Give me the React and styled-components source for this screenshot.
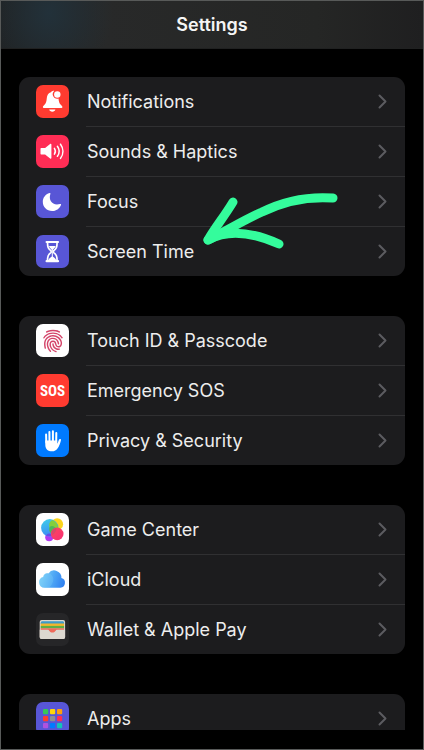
import styled, { createGlobalStyle } from "styled-components";
import { IoFingerPrint } from "react-icons/io5";

const Bell = () => (
  <svg viewBox="0 0 33 33" fill="#fff">
    <path d="M16.6 6c.9-.5 1.5-.4 1.6-.1-1.4 1.2-1.9 3.1-1.2 4.9.9 2.3 3.2 3.3 5.5 2.7.3 3.2.8 4.8 2.3 6.3 1 1 1.6 1.5 1.6 2.3 0 .7-.5 1-1.3 1H8.2c-.8 0-1.3-.4-1.3-1 0-.8.6-1.3 1.6-2.3 1.6-1.7 2-3.4 2.3-6.7.3-3.1 1.6-5.2 4.1-5.8.3-.6.8-1 1.7-1.3z" />
    <circle cx="21.3" cy="9.5" r="3.2" />
    <path d="M13.2 24.5h6.2c-.3 1.4-1.5 2.2-3.1 2.2s-2.8-.8-3.1-2.2z" />
  </svg>
);

const Speaker = () => (
  <svg viewBox="0 0 33 33" fill="none" stroke="#fff" strokeWidth="1.5" strokeLinecap="round">
    <path d="M5.5 13h3.6l5-4c.7-.5 1.3-.2 1.3.6v13.4c0 .8-.6 1.1-1.3.6l-5-4H5.5c-.7 0-1-.4-1-1v-4.6c0-.6.3-1 1-1z" fill="#fff" stroke="none" />
    <path d="M18.4 13.4c1.2 1.8 1.2 4 0 5.800M21.4 11.3c2.2 3 2.2 7 0 10M24.5 9.2c3.2 4.3 3.2 9.9 0 14.200" />
  </svg>
);

const Moon = () => (
  <svg viewBox="0 0 33 33" fill="#fff">
    <path d="M13.6 8c.5-.2 1 .2.8.8-2.3 6.9 2.5 12.4 9.7 10.2.7-.2 1.2.2.9.9-1.4 3.6-4.9 6.1-8.9 6.1-5.3 0-9.3-4-9.3-9.2 0-4 2.500-7.500 6.800-8.800z" />
  </svg>
);

const Hourglass = () => (
  <svg viewBox="0 0 33 33" fill="none" stroke="#fff" strokeWidth="1.7" strokeLinejoin="round" strokeLinecap="round">
    <path d="M10.6 7h11.400M10.6 26.2h11.4" strokeWidth="2.2" />
    <path d="M11.5 7.3c0 5 .7 6.3 3.6 8.6v1.5c-2.900 2.300-3.600 3.800-3.600 8.500M21.100 7.300c0 5-.7 6.300-3.600 8.600v1.500c2.900 2.300 3.600 3.800 3.600 8.500" />
    <path d="M13 11h6.600c-.5 1.700-1.400 2.600-3.300 4-1.900-1.400-2.800-2.300-3.300-4zM12.500 25.200c.3-1.600 1.500-2.300 3.800-3.900 2.300 1.600 3.500 2.300 3.800 3.900z" fill="#fff" stroke="none" />
    <path d="M16.3 14v8" strokeWidth="1" />
  </svg>
);

const Fingerprint = () => <IoFingerPrint size={24} color="#d4456a" />;

const Sos = () => <SosText>SOS</SosText>;

const Hand = () => (
  <svg viewBox="0 0 33 33" fill="none" stroke="#fff" strokeWidth="2" strokeLinecap="round">
    <path d="M10.1 10.5l.2 8M13.4 7.900l.1 10M16.900 7.200v10M20.300 9l-.1 9" />
    <path d="M9.300 16.500h11.900v3.300c.8-1.300 1.200-2.800 1.800-4.300.4-.9 2.200-.8 2 .4-.6 3.200-1.800 6.200-3.500 8.600-1.300 1.900-3 2.800-5.400 2.800-4.200 0-6.800-2.300-6.800-6.600z" fill="#fff" stroke="none" />
  </svg>
);

const GameBubbles = () => (
  <svg viewBox="0 0 33 33">
    <defs>
      <linearGradient id="blueBubble" x1="0" y1="0" x2="0.3" y2="1">
        <stop offset="0" stopColor="#3fd0e8" />
        <stop offset="1" stopColor="#3c8df5" />
      </linearGradient>
      <linearGradient id="pinkBubble" x1="0" y1="0" x2="1" y2="1">
        <stop offset="0" stopColor="#fb4a5b" />
        <stop offset="1" stopColor="#f92d76" />
      </linearGradient>
    </defs>
    <circle cx="21.2" cy="11.2" r="5.9" fill="#fbd51d" />
    <circle cx="13.2" cy="24.2" r="4" fill="#b13af0" />
    <circle cx="13.8" cy="14.8" r="8.7" fill="url(#blueBubble)" />
    <path d="M16.2 7a5.9 5.9 0 0 0 5.6 10.4 8.7 8.7 0 0 0-5.6-10.4z" fill="#83cf3c" />
    <path d="M13.5 14.3c2-2.2 5-1.500 7.700 2.300-1.500 2.800-4.500 4-6.400 3.400-1.700-1.500-2-3.500-1.300-5.700z" fill="#4cb85a" />
    <path d="M9.9 22.5a4 4 0 0 1 6.600-.3 8 8 0 0 1-6.600.3z" fill="#6250e8" />
    <circle cx="21.2" cy="20.9" r="6.3" fill="url(#pinkBubble)" />
    <path d="M15.3 19a6.300 6.300 0 0 1 5.100-4.300 8 8 0 0 1-4.200 7.300 6 6 0 0 1-.9-3z" fill="#d8486a" />
  </svg>
);

const Cloud = () => (
  <svg viewBox="0 0 33 33">
    <defs>
      <linearGradient id="cloud" x1="0" y1="0.5" x2="1" y2="0.7">
        <stop offset="0" stopColor="#7fd3f7" />
        <stop offset="0.5" stopColor="#4fa8f5" />
        <stop offset="1" stopColor="#2f7ff0" />
      </linearGradient>
    </defs>
    <path d="M8.6 24.700a5.500 5.500 0 0 1-1.400-10.800 4.700 4.700 0 0 1 5.200-3.500 7.200 7.200 0 0 1 13 4.700 4.900 4.900 0 0 1-1 9.600z" fill="url(#cloud)" />
    <path d="M7.2 13.900a4.700 4.700 0 0 1 8.800-1.500c2.500 3 1.500 8-3 12.300H8.600a5.500 5.500 0 0 1-1.400-10.800z" fill="#7fcdf8" opacity="0.3" />
  </svg>
);

const Wallet = () => (
  <svg viewBox="0 0 33 33">
    <rect x="3.7" y="7" width="25.4" height="19" rx="2" fill="#dcd8d0" />
    <path d="M4.7 10.2c0-1.400.6-2 2-2h19.400c1.400 0 2 .6 2 2v.8H4.700z" fill="#3c9bc8" />
    <path d="M4.7 10.500h23.400v2.600H4.700z" fill="#f3b52c" />
    <path d="M4.7 12.900h23.400v2.500H4.700z" fill="#5fae46" />
    <path d="M4.7 15.300h23.400v2.500H4.700z" fill="#ee6a5a" />
    <path d="M3.7 16.700h7.800c1.200 0 1.400.5 2 1.300.7 1 1.600 1.600 2.900 1.600s2.200-.6 2.900-1.600c.6-.8.8-1.300 2-1.300h7.800V24c0 1.300-.7 2-2 2H5.700c-1.300 0-2-.7-2-2z" fill="#dcd8d0" />
    <path d="M11.5 16.600h9.800c-1.200 0-1.400.6-2 1.400-.7 1-1.600 1.600-2.900 1.600s-2.200-.6-2.900-1.600c-.6-.8-.8-1.400-2-1.400z" fill="#ee6a5a" />
  </svg>
);

const appColors = [
  "#34c759", "#ffd60a", "#ff9f0a",
  "#ff3b30", "#8e8e93", "#ff2d55",
  "#af52de", "#007aff", "#12c4b8",
];

const AppGrid = () => (
  <svg viewBox="0 0 33 33">
    {appColors.map((color, i) => (
      <rect key={color} x={7 + (i % 3) * 7} y={7 + Math.floor(i / 3) * 7} width="5.2" height="5.2" rx="1" fill={color} />
    ))}
  </svg>
);

const groups = [
  [
    { label: "Notifications", color: "#ff3b30", Icon: Bell },
    { label: "Sounds & Haptics", color: "#ff2d55", Icon: Speaker },
    { label: "Focus", color: "#5856d6", Icon: Moon },
    { label: "Screen Time", color: "#5856d6", Icon: Hourglass, highlighted: true },
  ],
  [
    { label: "Touch ID & Passcode", color: "#fff", Icon: Fingerprint },
    { label: "Emergency SOS", color: "#ff3b30", Icon: Sos },
    { label: "Privacy & Security", color: "#007aff", Icon: Hand },
  ],
  [
    { label: "Game Center", color: "#fff", Icon: GameBubbles },
    { label: "iCloud", color: "#fff", Icon: Cloud },
    { label: "Wallet & Apple Pay", color: "#262628", Icon: Wallet },
  ],
  [{ label: "Apps", color: "#5856d6", Icon: AppGrid }],
];

function App() {
  return (
    <>
      <GlobalStyle />
      <Screen>
        <Header>
          <Title>Settings</Title>
        </Header>
        <Content>
          {groups.map((rows) => (
            <Group key={rows[0].label}>
              {rows.map(({ label, color, Icon, highlighted }) => (
                <Item key={label}>
                  <Row href="#">
                    <Badge $color={color}><Icon /></Badge>
                    <Label>{label}</Label>
                    <Chevron viewBox="0 0 9 15">
                      <path d="M1.5 1.5l6 6-6 6" />
                    </Chevron>
                  </Row>
                  {highlighted && (
                    <Arrow viewBox="0 0 140 56">
                      <path d="M133 8C105 6 82 12 62 22C44 30 28 40 8 50" />
                      <path d="M33 12C24 27 14 39 8 50C26 40 50 41 79 54" />
                    </Arrow>
                  )}
                </Item>
              ))}
            </Group>
          ))}
        </Content>
      </Screen>
    </>
  );
}

const GlobalStyle = createGlobalStyle`
* {
  box-sizing: border-box;
}
body {
  margin: 0;
  background: #000;
  font-family: Inter, "Liberation Sans", sans-serif;
}
`;

const Screen = styled.div`
  height: 100vh;
  display: flex;
  flex-direction: column;
  padding-bottom: 19px;
  background: #000;
  border: 1px solid #585a59;
`;

const Header = styled.header`
  flex: none;
  height: 48px;
  display: flex;
  align-items: center;
  justify-content: center;
  background:
    radial-gradient(ellipse 64px 72px at 48px 12px, #22313a, transparent),
    linear-gradient(90deg, #202223, #282929 25%, #252625 75%, #1f1f20);
  border-bottom: 1px solid #202121;
`;

const Title = styled.h1`
  margin: 0;
  font-size: 18px;
  line-height: 24px;
  font-weight: 600;
  color: #f5f5f5;
`;

const Content = styled.main`
  flex: 1;
  min-height: 0;
  display: flex;
  flex-direction: column;
  gap: 40px;
  padding: 28px 18px 0;
  overflow-y: auto;
  scrollbar-width: none;
`;

const Group = styled.ul`
  flex: none;
  margin: 0;
  padding: 0;
  list-style: none;
  background: #1c1c1e;
  border-radius: 11px;
`;

const Item = styled.li`
  position: relative;

  & + &::before {
    content: "";
    display: block;
    height: 1px;
    margin-left: 67px;
    background: #303032;
  }
`;

const Row = styled.a`
  height: 49px;
  display: flex;
  align-items: center;
  gap: 18px;
  padding: 0 18px 0 17px;
  color: #ededed;
  text-decoration: none;
`;

const Badge = styled.span`
  flex: none;
  width: 33px;
  height: 33px;
  display: flex;
  align-items: center;
  justify-content: center;
  border-radius: 7px;
  background: ${({ $color }) => $color};
`;

const SosText = styled.span`
  font-family: "Liberation Sans Narrow", "Roboto Condensed", "Open Sans Condensed", Roboto, sans-serif;
  font-size: 15px;
  font-weight: 700;
  color: #fff;
`;

const Label = styled.span`
  flex: 1;
  font-size: 18px;
  line-height: 24px;
`;

const Chevron = styled.svg`
  flex: none;
  width: 9px;
  height: 15px;
  fill: none;
  stroke: #5c5c60;
  stroke-width: 2;
  stroke-linecap: round;
  stroke-linejoin: round;
`;

/* hand-drawn pointer lying over the rows */
const Arrow = styled.svg`
  position: absolute;
  left: 181px;
  bottom: 30px;
  width: 140px;
  height: 56px;
  overflow: visible;
  fill: none;
  stroke: #34fc9c;
  stroke-width: 9;
  stroke-linecap: round;
  stroke-linejoin: round;
  pointer-events: none;
`;

export default App;
